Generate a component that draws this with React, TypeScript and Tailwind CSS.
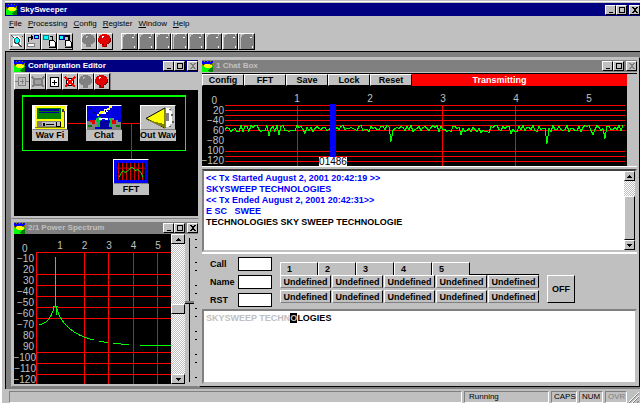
import type { ReactNode } from 'react'

const RAISED = 'border border-t-white border-l-white border-r-black border-b-black bg-[#c0c0c0]'
const CHECKER = 'bg-[repeating-conic-gradient(#ffffff_0_25%,#c0c0c0_0_50%)] bg-[length:2px_2px]'

const MENUS = ['File', 'Processing', 'Config', 'Register', 'Window', 'Help']
const CHAT_BUTTONS = ['Config', 'FFT', 'Save', 'Lock', 'Reset']
const MACROS = Array.from({ length: 10 }, (_, i) => i)

function AppIcon() {
  return (
    <svg className="h-[11px] w-[11px] shrink-0" viewBox="0 0 11 11" shapeRendering="crispEdges" aria-hidden="true">
      <rect width="11" height="11" fill="#00ff00" />
      <path d="M0 0h11v5h-11z" fill="#808000" />
      <path d="M0 0h2v1h1v-1h2v1h1v-1h2v1h1v-1h2v2h-1v1h-8v1h-1v-1h-1z" fill="#0000ff" />
      <path d="M2 4h1v-1h5v1h2v2h-1v1h-6v-1h-1z" fill="#ffff00" />
      <path d="M11 6v5h-4v-1h-1v-1h1v-1h1v-1h2v-1z" fill="#008000" />
    </svg>
  )
}

function WindowControls({ closeDisabled = false }: { closeDisabled?: boolean }) {
  const button = `flex h-[10px] w-[11px] items-center justify-center ${RAISED}`
  return (
    <div className="flex shrink-0 items-center">
      <button className={button} aria-label="Minimize">
        <svg className="h-2 w-2" viewBox="0 0 8 8" shapeRendering="crispEdges">
          <path d="M2 6h4v1h-4z" />
        </svg>
      </button>
      <button className={button} aria-label="Maximize">
        <svg className="h-2 w-2" viewBox="0 0 8 8" shapeRendering="crispEdges">
          <path d="M1 1h6v6h-6zM2 2v4h4v-4z" fillRule="evenodd" />
        </svg>
      </button>
      <button className={`ml-0.5 ${button}`} aria-label="Close">
        <svg className="h-2 w-2" viewBox="0 0 8 8" shapeRendering="crispEdges">
          <path
            d="M1 1h2v1h2v-1h2v1h-1v1h-1v2h1v1h1v1h-2v-1h-2v1h-2v-1h1v-1h1v-2h-1v-1h-1z"
            fill={closeDisabled ? '#808080' : '#000000'}
          />
        </svg>
      </button>
    </div>
  )
}

function ChildWindow({
  title,
  active = false,
  closeDisabled = false,
  className = '',
  children,
}: {
  title: string
  active?: boolean
  closeDisabled?: boolean
  className?: string
  children: ReactNode
}) {
  return (
    <section className={`flex min-w-0 flex-col border border-[#c0c0c0] border-b-[#808080] bg-[#c0c0c0] py-0.5 pl-0.5 ${className}`}>
      <header
        className={`flex h-3 shrink-0 items-center gap-[3px] ${active ? 'bg-[#000080] text-white' : 'bg-[#808080] text-[#c0c0c0]'}`}
      >
        <AppIcon />
        <h2 className="flex-1 truncate text-[8px] leading-3 font-bold">{title}</h2>
        <WindowControls closeDisabled={closeDisabled} />
      </header>
      {children}
    </section>
  )
}

function ToolButton({ label, children }: { label: string; children: ReactNode }) {
  return (
    <button aria-label={label} className={`flex h-[17px] w-4 shrink-0 items-center justify-center ${RAISED}`}>
      <svg className="h-[14px] w-[14px] shrink-0" viewBox="0 0 14 14" shapeRendering="crispEdges">
        {children}
      </svg>
    </button>
  )
}

function Ball({ on = false }: { on?: boolean }) {
  return (
    <>
      <path
        d="M4 0h5v1h2v1h1v2h1v4h-1v1h-1v1h-2v3h-5v-3h-2v-1h-1v-1h-1v-4h1v-2h1v-1h2z"
        fill={on ? '#e00000' : '#808080'}
      />
      <path d="M4 2h2v1h-1v1h-1z" fill={on ? '#ffffff' : '#c0c0c0'} />
      {on && <path d="M12 4h1v4h-1v1h-1v1h-2v1h-5v-1h5v-1h2v-2h1zM5 11h4v2h-4z" fill="#800000" />}
      {on && <path d="M6 10h2v2h-2z" fill="#ff0000" />}
    </>
  )
}

function Document({ x }: { x: number }) {
  return (
    <>
      <path d={`M${x} 6h4l2 2v5h-6z`} fill="#ffffff" stroke="#000000" />
      <path d={`M${x} 12h6v1h-6z`} fill="#808080" />
    </>
  )
}

function MainToolbar() {
  return (
    <div className="flex h-[20px] items-center px-1" role="toolbar" aria-label="Main">
      <ToolButton label="Find">
        <path d="M3 2h5l3 3v7h-8z" fill="#ffffff" />
        <path d="M4 4h4v1h2v5h-5v-2h-1z" fill="#00ffff" />
        <path d="M1 1h1v1h1v1h1v1h-1v-1h-1v-1h-1zM6 3h2v1h1v1h1v3h-1v2h1v1h1v1h1v1h-2v-1h-1v-1h-1v-1h-3v-1h-1v-4h1v-1h1zM6 4v1h-1v3h1v1h2v-1h1v-3h-1v-1zM1 12h1v1h-1zM12 2h1v1h-1z" fill="#404040" fillRule="evenodd" />
      </ToolButton>
      <ToolButton label="Load">
        <path d="M8 1h5v4h-5z" fill="#000080" />
        <path d="M9 2h3v2h-3z" fill="#00ffff" />
        <path d="M2.500 8v-4.500h4" fill="none" stroke="#000000" />
        <path d="M5 1h1v1h1v3h-1v1h-1z" />
        <path d="M1.500 9.500h7v3h-7z" fill="#ffffff" stroke="#808080" />
      </ToolButton>
      <ToolButton label="Save">
        <path d="M1 1h6v5h-6z" fill="#008080" />
        <path d="M2 2h4v3h-4z" fill="#00ffff" />
        <path d="M8 2.500h2.500v4" fill="none" stroke="#000000" />
        <Document x={7} />
      </ToolButton>
      <ToolButton label="Export">
        <path d="M1 1h6v5h-6z" fill="#000080" />
        <path d="M2 2h3v3h-3z" fill="#00ffff" />
        <path d="M7 2h4v4" fill="none" stroke="#000000" strokeWidth="2" />
        <Document x={7} />
      </ToolButton>
      <div className="ml-2 flex">
        <ToolButton label="Stop">
          <Ball />
        </ToolButton>
        <ToolButton label="Record">
          <Ball on />
        </ToolButton>
      </div>
      <div className="ml-2 flex w-[134px]">
        {Array.from({ length: 8 }, (_, i) => (
          <button
            key={i}
            disabled
            aria-label={`Slot ${i + 1}`}
            className="flex h-[17px] flex-1 items-center justify-center border border-t-white border-l-white border-r-black border-b-black bg-[#808080]"
          >
            <svg className="h-[15px] w-[14px]" viewBox="0 0 14 15" shapeRendering="crispEdges">
              <path d="M0 0h4v1h-2v2h-1v12h-1z" fill="#c0c0c0" />
              <path d="M10 3h2v1h-2zM12 12h1v2h-1z" fill="#ffffff" />
              <path d="M12 0h1v2h-1z" fill="#c0c0c0" />
            </svg>
          </button>
        ))}
      </div>
    </div>
  )
}

function DiskDrawing() {
  return (
    <>
      <rect width="34" height="24" fill="#ffff00" />
      <path d="M0 0h2v24h-2zM32 0h2v24h-2z" fill="#ffffff" />
      <path d="M4 2h24v12h-24z" fill="#008000" />
      <path d="M6 3h20v2h-20zM6 6h20v1h-20z" fill="#0000a0" />
      <path d="M29 3h2v3h-2zM31 5h1v17h-1z" fill="#404040" />
      <path d="M4 16h24v6h-24z" fill="#808080" />
      <path d="M9 17h15v4h-15z" fill="#c0c0c0" />
      <path d="M10 18h2v3h-2zM13 19h8v1h-8zM23 17h5v5h-5z" />
      <path d="M24 17h3v4h-3z" fill="#c0c0c0" />
      <path d="M2 22h30v1h-30z" fill="#808000" />
    </>
  )
}

function ChatDrawing() {
  return (
    <>
      <rect width="34" height="24" fill="#0000e0" />
      <path d="M3 2h1v1h-1zM7 6h1v1h-1zM26 9h1v1h-1zM30 4h1v2h-1zM4 11h1v1h-1zM14 3h1v1h-1z" fill="#000000" />
      <path d="M22 0h3v2h-2v2h-3v-2h2zM13 5h5v2h-3v1h-3v-2h1zM10 8h2v2h-2z" fill="#ffff00" />
      <path d="M17 3h3v2h1v1h-2v2h-4v-1h2z" fill="#ffffff" />
      <path d="M18 4h1v2h-1zM20 7h1v1h-1z" fill="#000000" />
      <path d="M0 16h5v-1h4v-2h3v2h-2v3h2v4h-4v2h-8zM34 17h-3v-2h-4v-2h-5v2h3v3h-2v4h2v2h9z" fill="#808080" />
      <path d="M11 11h3v1h-2v3h2v3h-1v4h-3v-5h-1v-4h2zM22 12h3v4h2v3h-2v3h-3v-4h1v-3h-1z" fill="#00c040" />
      <path d="M3 15h5v4h-3v-2h-2zM25 15h4v4h-4z" fill="#e00000" />
      <path d="M12 13h9v2h-3v-1h-3v1h-3z" fill="#ffffff" />
      <path d="M1 20h4v2h-4zM29 20h4v2h-4z" fill="#008000" />
      <path d="M13 16h9v8h-9z" fill="#0000a0" />
    </>
  )
}

function SpeakerDrawing() {
  return (
    <>
      <rect width="34" height="24" fill="#c0c0c0" />
      <path d="M24 2h5v3h2v14h-2v3h-5z" fill="#ffffff" />
      <path d="M28 3h2v1h-2zM30 8h2v2h-2zM31 16h2v2h-2zM28 21h2v1h-2zM32 12h1v1h-1z" fill="#606060" />
      <path d="M5 13l19-11v21z" fill="#ffff00" stroke="#000000" />
      <path d="M5 14l19 9v-4z" fill="#808000" />
      <path d="M25 7h3v9h-3z" fill="#808080" />
    </>
  )
}

function FftDrawing() {
  return (
    <>
      <rect width="34" height="24" fill="#0000ff" />
      <path d="M3 3h28v18h-28z" />
      <path d="M4.500 3v18M8.500 3v18M12.500 3v18M16.500 3v18M20.500 3v18M24.500 3v18M28.500 3v18M3 8.500h28" fill="none" stroke="#e00000" />
      <path d="M5 18l2-4 2-3 2 2 2-1 2-2 2-2 2 0 2 3 3-1 3 3 2 5" fill="none" stroke="#00ff00" />
    </>
  )
}

function Node({ label, place, children }: { label: string; place: string; children: ReactNode }) {
  return (
    <div className={`absolute flex w-9 flex-col overflow-hidden bg-[#c0c0c0] ${place}`}>
      <svg
        className="h-[25px] w-9 border border-t-white border-l-white border-r-black border-b-[#808080]"
        viewBox="0 0 34 24"
        preserveAspectRatio="none"
        shapeRendering="crispEdges"
        aria-hidden="true"
      >
        {children}
      </svg>
      <span className="flex h-[11px] justify-center text-[9px] leading-[11px] font-bold whitespace-nowrap text-black">{label}</span>
    </div>
  )
}

function ConfigEditor() {
  return (
    <ChildWindow title="Configuration Editor" active closeDisabled>
      <div className="mt-px flex h-[17px]" role="toolbar" aria-label="Editor">
        <ToolButton label="Insert">
          <path d="M3.500 2.500h7v8h-7zM0 6.500h3M11 6.500h3M5 6.500h4M7.500 4v5" fill="none" stroke="#808080" />
        </ToolButton>
        <ToolButton label="Delete">
          <path d="M3 4h8v6h-8zM1 2l3 3M13 2l-3 3M1 12l3-3M13 12l-3-3" fill="#a0a0a0" stroke="#808080" strokeWidth="2" />
        </ToolButton>
        <ToolButton label="Add">
          <path d="M3.500 2.500h8v9h-8z" fill="#ffffff" stroke="#000000" />
          <path d="M5 7.500h5M7.500 5v5" stroke="#000000" />
        </ToolButton>
        <ToolButton label="Remove">
          <path d="M3.500 3.500h7v7h-7z" fill="#ffffff" stroke="#000000" />
          <path d="M2 2l10 10M12 2l-10 10" stroke="#ff0000" strokeWidth="2" />
        </ToolButton>
        <ToolButton label="Stop">
          <Ball />
        </ToolButton>
        <ToolButton label="Run">
          <Ball on />
        </ToolButton>
        <div className="flex-1 border-l border-[#808080]" />
      </div>
      <div className="relative h-[126px] bg-black">
        <svg className="h-[126px] w-full" viewBox="0 0 184 126" preserveAspectRatio="xMinYMin meet" shapeRendering="crispEdges" aria-hidden="true">
          <path d="M8 5h164v2h-164zM8 7h1v54h-1zM171 7h1v54h-1zM8 60h164v1h-164z" fill="#00ff00" />
          <path d="M54 33h18v1h-18zM108 33h18v1h-18zM117 34h1v36h-1z" fill="#ff0000" />
        </svg>
        <Node label="Wav Fi" place="left-[18px] top-[15px]">
          <DiskDrawing />
        </Node>
        <Node label="Chat" place="left-[72px] top-[15px]">
          <ChatDrawing />
        </Node>
        <Node label="Out Wav" place="left-[126px] top-[15px]">
          <SpeakerDrawing />
        </Node>
        <Node label="FFT" place="left-[99px] top-[69px]">
          <FftDrawing />
        </Node>
      </div>
    </ChildWindow>
  )
}

function ArrowButton({ down = false }: { down?: boolean }) {
  return (
    <button aria-label={down ? 'Scroll down' : 'Scroll up'} className={`flex h-[10px] w-full shrink-0 items-center justify-center ${RAISED}`}>
      <svg className="h-[3px] w-[5px]" viewBox="0 0 5 3" shapeRendering="crispEdges">
        <path d={down ? 'M0 0h5v1h-1v1h-1v1h-1v-1h-1v-1h-1z' : 'M2 0h1v1h1v1h1v1h-5v-1h1v-1h1z'} />
      </svg>
    </button>
  )
}

const POWER_LABELS = ['−10', '20', '30', '−40', '−50', '−60', '−70', '80', '90', '−100', '−110', '−120']

function PowerChart() {
  return (
    <svg
      className="h-[150px] min-w-0 flex-1 bg-black"
      viewBox="0 0 157 150"
      preserveAspectRatio="xMinYMin meet"
      role="img"
      aria-label="Power spectrum"
    >
      <path
        d="M22.5 18v132M70.5 18v132M94.5 18v132M119.5 18v132M143.5 18v132M22 18.5h135M22 40.5h135M22 51.5h135M22 62.5h135M22 73.5h135M22 84.5h135M22 118.5h135M22 129.5h135M22 140.5h135"
        stroke="#ff0000"
      />
      <g fill="none" stroke="#00ff00" shapeRendering="crispEdges">
        <path d="M41.5 23v49M39 72.5h5M42.5 72v9" />
        <path d="M25 90.500q11-1 15-17M43 75q3 12 13 20t24 11M85 107.500l9 1M99 109.500l16 1M126 111.500h31" />
      </g>
      <g fill="#c0c0c0" fontSize="10">
        <text x="8" y="18">0</text>
        {['1', '2', '3', '4', '5'].map((tick, i) => (
          <text key={tick} x={46 + i * 24.5} y="15" textAnchor="middle">{tick}</text>
        ))}
        {POWER_LABELS.map((label, i) => (
          <text key={label} x={label.length > 3 ? 22 : 20} y={28 + i * 11} textAnchor="end">{label}</text>
        ))}
      </g>
    </svg>
  )
}

const SLIDER_TICKS = [5, 13, 28, 36, 51, 59, 74, 82, 97, 105, 120, 128, 143]

function PowerSpectrum() {
  return (
    <ChildWindow title="2/1 Power Spectrum" className="flex-1">
      <div className="flex flex-1 bg-[#c0c0c0]">
        <div className="flex min-w-0 flex-1 bg-black">
          <PowerChart />
        </div>
        <div className={`flex w-[14px] flex-col ${CHECKER}`}>
          <ArrowButton />
          <div className="flex-1" />
          <div className={`h-[10px] w-full ${RAISED}`} />
          <div className="flex-1" />
          <ArrowButton down />
        </div>
        <div className="flex w-[13px]">
          <input
            type="range"
            aria-label="Level"
            defaultValue={55}
            className="mt-1 h-[144px] w-[9px] appearance-none bg-[linear-gradient(to_right,transparent_4px,#000_4px,#000_5px,transparent_5px)] [writing-mode:vertical-lr] [direction:rtl] [&::-webkit-slider-thumb]:h-[3px] [&::-webkit-slider-thumb]:w-[9px] [&::-webkit-slider-thumb]:appearance-none [&::-webkit-slider-thumb]:border-b [&::-webkit-slider-thumb]:border-black [&::-webkit-slider-thumb]:bg-[#808080]"
          />
          <svg className="h-[150px] w-1" viewBox="0 0 4 150" shapeRendering="crispEdges" aria-hidden="true">
            {SLIDER_TICKS.map((y) => (
              <rect key={y} x="1" y={y} width="2" height="1" />
            ))}
          </svg>
        </div>
      </div>
    </ChildWindow>
  )
}

// x offset -> extra depth of the dips in the noise floor
const DIPS: Record<number, number> = {
  67: 6, 77: 4, 103: 6, 153: 4, 189: 11, 259: 4, 279: 5, 287: 6, 309: 4, 335: 4, 345: 12, 391: 4, 403: 12,
}

function noiseTrace() {
  let seed = 7
  let path = ''
  for (let x = 23; x < 422; x += 2) {
    seed = (seed * 1103515245 + 12345) % 2147483648
    const y = 39 + Math.floor((seed / 2147483648) * 7) + (DIPS[x] ?? 0)
    path += `${x === 23 ? 'M' : 'L'}${x} ${y}.5`
  }
  return path
}

const BAND_LABELS = ['0', '20', '−40', '60', '−80', '100', '−120']

function BandChart() {
  return (
    <svg
      className="h-[80px] w-full bg-black"
      viewBox="0 0 424 80"
      preserveAspectRatio="xMinYMin meet"
      role="img"
      aria-label="Band spectrum"
    >
      <path
        d="M23 19.500h400M23 24.500h400M23 29.500h400M23 34.500h400M23 39.500h400M23 44.500h400M23 65.500h400M23 70.500h400M23 75.500h400M95.500 19v61M240.500 19v61M313.500 19v61"
        stroke="#ff0000"
      />
      <path d={noiseTrace()} fill="none" stroke="#00ff00" shapeRendering="crispEdges" />
      <g fill="#c0c0c0" fontSize="10">
        {['1', '2', '3', '4', '5'].map((tick, i) => (
          <text key={tick} x={95 + i * 73} y="16" textAnchor="middle">{tick}</text>
        ))}
        {BAND_LABELS.map((label, i) => (
          <text key={label} x={i === 0 ? 15 : 22} y={18 + i * 10} textAnchor="end">{label}</text>
        ))}
      </g>
      <rect x="128" y="18" width="6" height="53" fill="#0000ff" />
      <rect x="117" y="71" width="28" height="9" fill="#ffffff" />
      <text x="131" y="79" fontSize="10" textAnchor="middle">01486</text>
    </svg>
  )
}

function Macros() {
  return (
    <div className="mt-2">
      <div className="flex h-[13px]" role="tablist">
        {['1', '2', '3', '4', '5'].map((tab) => (
          <button
            key={tab}
            role="tab"
            className="w-[38px] border border-b-0 border-t-white border-l-white border-r-black pl-1.5 text-left text-[9px] leading-[13px] font-bold"
          >
            {tab}
          </button>
        ))}
        <div className="flex-1 border-b border-black" />
      </div>
      <div className="grid grid-cols-5 gap-x-px gap-y-0.5">
        {MACROS.map((i) => (
          <button key={i} className="h-[13px] w-[51px] border border-t-white border-l-white border-r-black border-b-[#808080] text-[9px] leading-[10px] font-bold">
            Undefined
          </button>
        ))}
      </div>
    </div>
  )
}

function ChatBox() {
  return (
    <ChildWindow title="1 Chat Box" closeDisabled className="flex-1 border-r-black border-b-black pr-0.5">
      <div className="mt-px flex border-t border-black">
        <div className="min-w-0 flex-1 bg-black">
          <div className="flex h-3">
            {CHAT_BUTTONS.map((label) => (
              <button key={label} className={`w-[42px] shrink-0 text-[9px] leading-[10px] font-bold ${RAISED}`}>
                {label}
              </button>
            ))}
            <div className="flex-1 bg-[#ff0000] pr-10 text-center text-[9px] leading-3 font-bold text-white">Transmitting</div>
          </div>
          <BandChart />
        </div>
        <div className="w-[10px] bg-[#c0c0c0]" />
      </div>

      <div className="h-px bg-white" />
      <div className="mt-0.5 flex h-[83px] border-2 border-t-[#404040] border-l-[#808080] border-r-[#c0c0c0] border-b-[#c0c0c0] bg-white">
        <div role="log" className="min-w-0 flex-1 overflow-hidden pt-0.5 pl-0.5 text-[9px] leading-[11px] font-bold whitespace-nowrap text-[#0000ff]">
          <p>&lt;&lt; Tx Started August 2, 2001 20:42:19 &gt;&gt;</p>
          <p>SKYSWEEP TECHNOLOGIES</p>
          <p>&lt;&lt; Tx Ended August 2, 2001 20:42:31&gt;&gt;</p>
          <p>E SC&nbsp;&nbsp; SWEE</p>
          <p className="text-black">TECHNOLOGIES SKY SWEEP TECHNOLOGIE</p>
        </div>
        <div className={`flex w-[11px] flex-col ${CHECKER}`}>
          <ArrowButton />
          <div className="h-[15px]" />
          <div className={`flex-1 ${RAISED}`} />
          <ArrowButton down />
        </div>
      </div>

      <div className="flex h-[57px] border-t-2 border-white">
        <div className="mt-[3px] ml-2 grid w-[62px] shrink-0 grid-cols-[28px_1fr] content-start items-center gap-y-1 text-[9px] leading-3 font-bold">
          <label htmlFor="call">Call</label>
          <input id="call" className="h-[14px] w-full border border-black bg-white px-0.5" />
          <label htmlFor="name">Name</label>
          <input id="name" className="h-[14px] w-full border border-black bg-white px-0.5" />
          <label htmlFor="rst">RST</label>
          <input id="rst" className="h-[14px] w-full border border-black bg-white px-0.5" />
        </div>
        <div className="ml-2">
          <Macros />
        </div>
        <button className={`mt-[21px] ml-2 h-[28px] w-[28px] text-[9px] leading-3 font-bold ${RAISED}`}>OFF</button>
      </div>

      <div
        role="textbox"
        aria-label="Message"
        className="flex-1 border-2 border-t-[#808080] border-l-[#808080] border-r-[#c0c0c0] border-b-[#c0c0c0] bg-white pt-0.5 pl-0.5 text-[9px] leading-[11px] font-bold text-black"
      >
        <span className="text-[#c0c0c0]">SKYSWEEP TECHN</span>
        <span className="bg-black text-[#c0c0c0]">O</span>
        <span>LOGIES</span>
      </div>
    </ChildWindow>
  )
}

function StatusBar() {
  const panel = 'border border-t-[#808080] border-l-[#808080] border-r-white border-b-white'
  return (
    <footer className="flex h-[14px] shrink-0 items-stretch gap-0.5 pt-0.5 pr-px pl-1 text-[8px] leading-[10px]">
      <div className={`flex-1 ${panel}`} />
      <div className={`w-[85px] pl-1 ${panel}`}>Running</div>
      <div className={`w-[26px] pl-0.5 ${panel}`}>CAPS</div>
      <div className={`w-[24px] pl-0.5 ${panel}`}>NUM</div>
      <div className={`w-[22px] pl-0.5 text-[#808080] ${panel}`}>OVR</div>
      <svg className="h-[12px] w-[10px] self-end" viewBox="0 0 10 12" aria-hidden="true">
        <path d="M0 12L10 2M4 12L10 6M8 12L10 10" stroke="#808080" />
        <path d="M-1 12L10 1M3 12L10 5" stroke="#ffffff" />
      </svg>
    </footer>
  )
}

export default function App() {
  return (
    <div className="flex min-h-screen flex-col border-l-2 border-white bg-[#c0c0c0] pl-[3px] font-['Liberation_Sans',Arial,sans-serif] text-black">
      <div className="mt-px h-0.5 shrink-0 border-t border-white" />
      <header className="flex h-[13px] shrink-0 items-center gap-[3px] bg-[#000080] pl-px text-white">
        <AppIcon />
        <h1 className="flex-1 text-[8px] leading-[13px] font-bold">SkySweeper</h1>
        <WindowControls />
      </header>
      <nav className="flex h-[15px] shrink-0 items-center gap-1.5 pl-1 text-[8px] leading-3">
        {MENUS.map((menu) => (
          <button key={menu}>
            <span className="underline">{menu[0]}</span>
            {menu.slice(1)}
          </button>
        ))}
      </nav>
      <MainToolbar />
      <main className="flex flex-1 border-t border-l border-black bg-[#808080] pt-[5px] pb-0.5 pl-[5px]">
        <div className="flex w-[188px] shrink-0 flex-col">
          <ConfigEditor />
          <PowerSpectrum />
        </div>
        <div className="flex min-w-0 flex-1">
          <ChatBox />
        </div>
      </main>
      <StatusBar />
    </div>
  )
}
